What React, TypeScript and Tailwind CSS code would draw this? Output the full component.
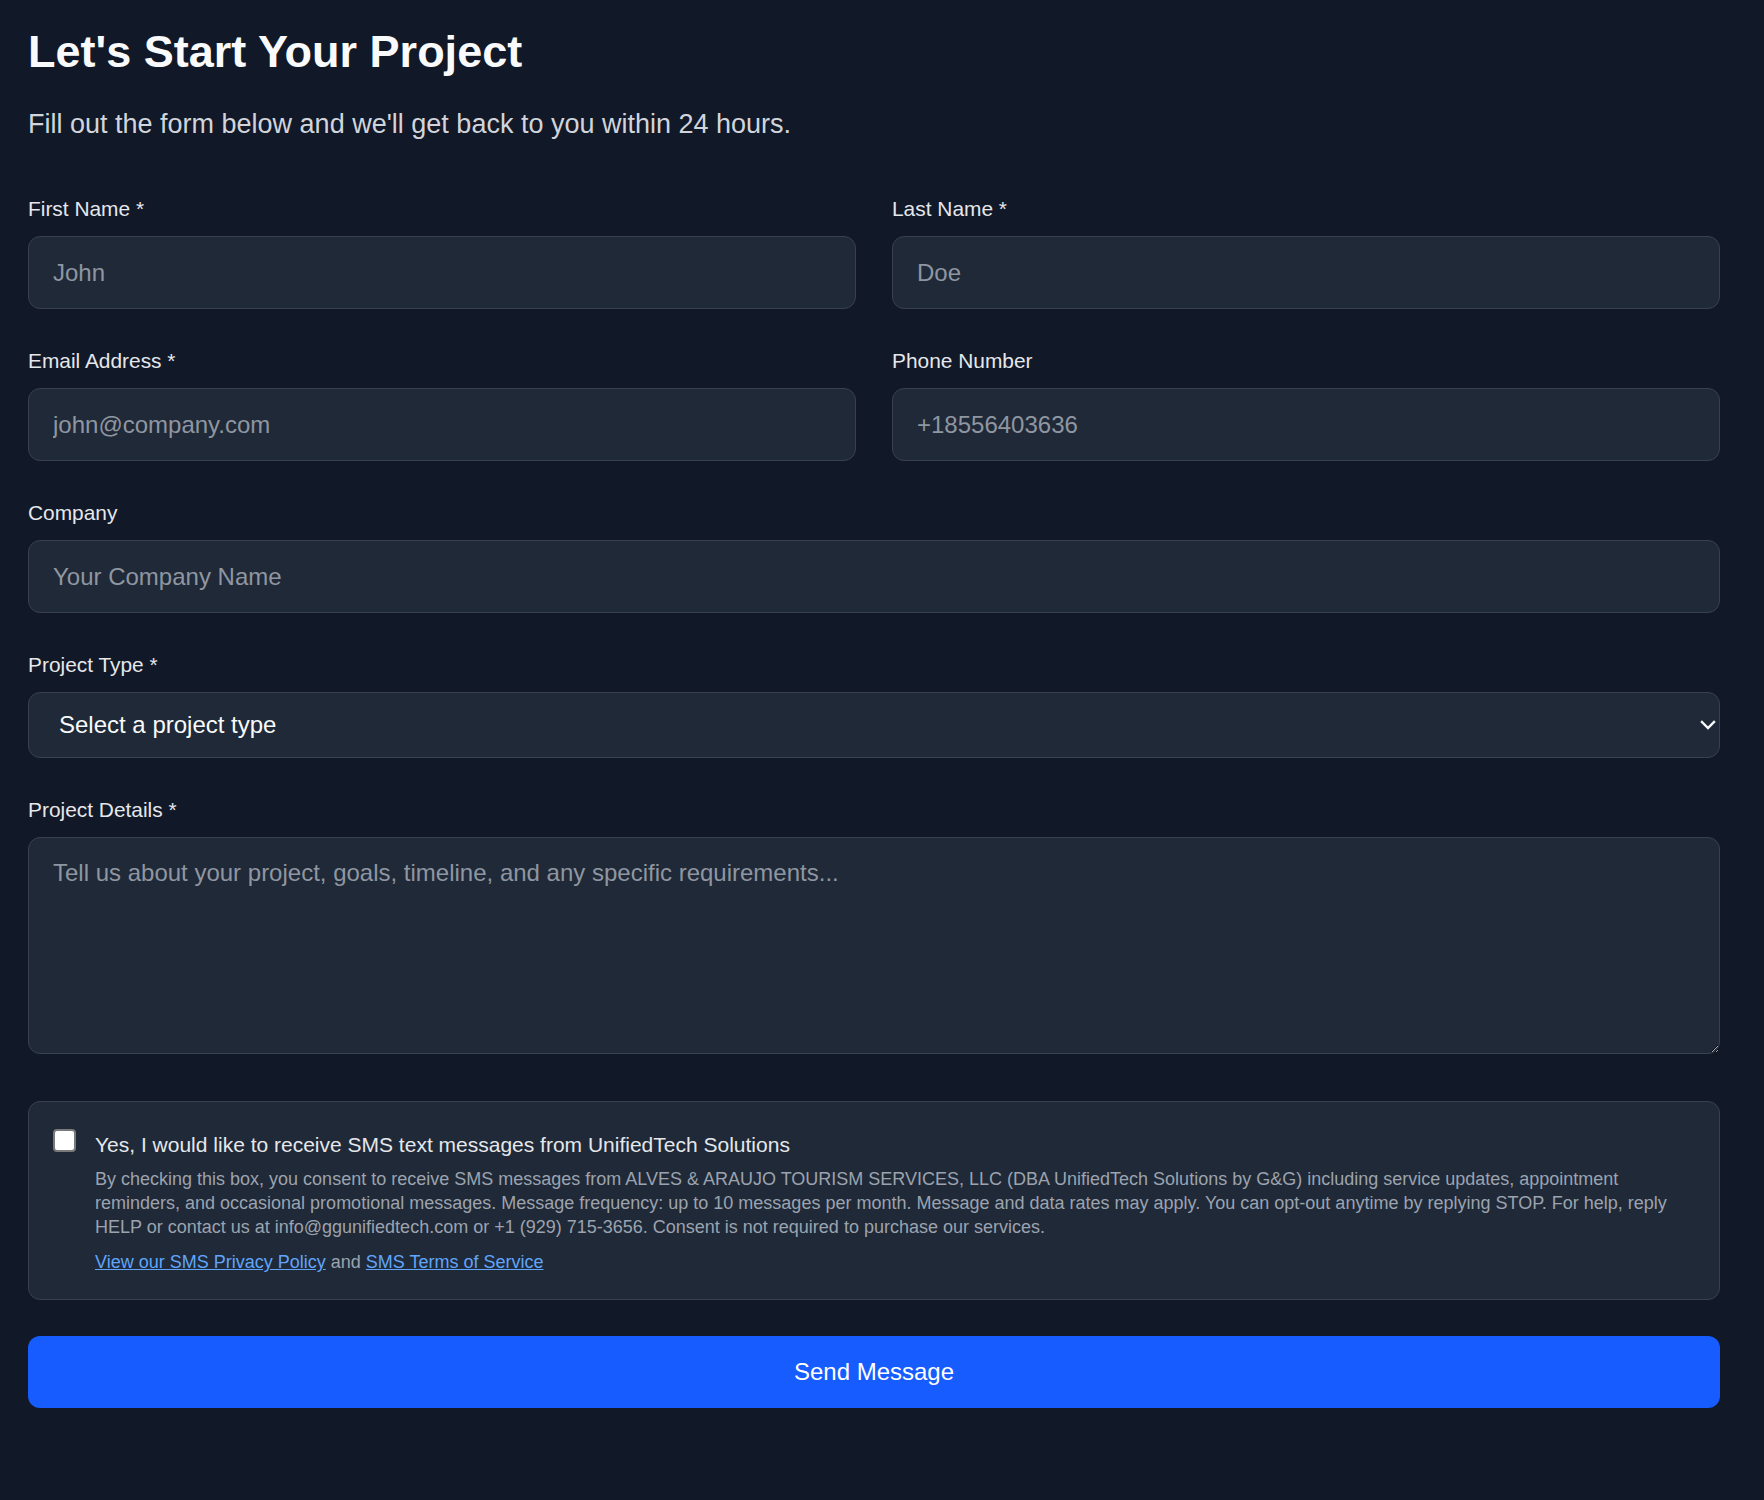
import React from "react";

const font = { fontFamily: '"Liberation Sans", Arial, sans-serif' };

function Label({ children }: { children: React.ReactNode }) {
  return (
    <label className="block text-[20.9px] leading-[28px] text-[#e5e7eb] mb-[13px]">
      {children}
    </label>
  );
}

function Input({ placeholder, type = "text" }: { placeholder: string; type?: string }) {
  return (
    <input
      type={type}
      placeholder={placeholder}
      className="block w-full h-[73px] px-[24px] bg-[#1f2937] border border-[#374151] rounded-[12px] text-[24px] text-[#f3f4f6] placeholder:text-[#8f96a1] outline-none"
    />
  );
}

export default function App() {
  return (
    <div
      className="min-h-screen w-full bg-[#111827] pl-[28px] pr-[44px] pt-[25px] pb-[60px]"
      style={font}
    >
      <h1 className="text-[45px] leading-[54px] font-bold text-[#f9fafb]">
        Let's Start Your Project
      </h1>
      <p className="mt-[27px] text-[27px] leading-[36px] text-[#d1d5db]">
        Fill out the form below and we'll get back to you within 24 hours.
      </p>

      <form className="mt-[53px] flex flex-col" onSubmit={(e) => e.preventDefault()}>
        <div className="flex flex-col gap-[38px]">
          <div className="grid grid-cols-2 gap-x-[36px]">
            <div>
              <Label>First Name *</Label>
              <Input placeholder="John" />
            </div>
            <div>
              <Label>Last Name *</Label>
              <Input placeholder="Doe" />
            </div>
          </div>

          <div className="grid grid-cols-2 gap-x-[36px]">
            <div>
              <Label>Email Address *</Label>
              <Input placeholder="john@company.com" type="email" />
            </div>
            <div>
              <Label>Phone Number</Label>
              <Input placeholder="+18556403636" type="tel" />
            </div>
          </div>

          <div>
            <Label>Company</Label>
            <Input placeholder="Your Company Name" />
          </div>

          <div>
            <Label>Project Type *</Label>
            <div className="relative">
              <select
                defaultValue=""
                className="block w-full h-[66px] pl-[30px] pr-[40px] appearance-none bg-[#1f2937] border border-[#374151] rounded-[12px] text-[24px] text-[#f9fafb] outline-none"
              >
                <option value="">Select a project type</option>
                <option value="web">Web Development</option>
                <option value="mobile">Mobile App</option>
                <option value="other">Other</option>
              </select>
              <svg
                className="pointer-events-none absolute right-[4px] top-1/2 -translate-y-1/2"
                width="16"
                height="10"
                viewBox="0 0 16 10"
                fill="none"
              >
                <path
                  d="M2 2 L8 8 L14 2"
                  stroke="#f9fafb"
                  strokeWidth="2.4"
                  strokeLinecap="square"
                />
              </svg>
            </div>
          </div>

          <div>
            <Label>Project Details *</Label>
            <textarea
              placeholder="Tell us about your project, goals, timeline, and any specific requirements..."
              className="block w-full h-[217px] px-[24px] pt-[17px] bg-[#1f2937] border border-[#374151] rounded-[12px] text-[24px] leading-[36px] text-[#f3f4f6] placeholder:text-[#8f96a1] outline-none"
            />
          </div>
        </div>

        <div className="mt-[47px] bg-[#1f2937] border border-[#374151] rounded-[12px] p-[24px] flex items-start gap-[19px]">
          <input
            type="checkbox"
            className="appearance-none shrink-0 mt-[3px] w-[23px] h-[23px] bg-white border-2 border-[#7a7a7a] rounded-[4px]"
          />
          <div className="flex-1">
            <p className="text-[21px] leading-[38px] text-[#e5e7eb]">
              Yes, I would like to receive SMS text messages from UnifiedTech Solutions
            </p>
            <p className="mt-[4px] text-[18px] leading-[23.8px] text-[#9ca3af]">
              By checking this box, you consent to receive SMS messages from ALVES &amp; ARAUJO
              TOURISM SERVICES, LLC (DBA UnifiedTech Solutions by G&amp;G) including service
              updates, appointment reminders, and occasional promotional messages. Message
              frequency: up to 10 messages per month. Message and data rates may apply. You can
              opt-out anytime by replying STOP. For help, reply HELP or contact us at
              info@ggunifiedtech.com or +1 (929) 715-3656. Consent is not required to purchase our
              services.
            </p>
            <p className="mt-[12px] text-[18px] leading-[23.8px] text-[#9ca3af]">
              <a href="#" className="text-[#60a5fa] underline">
                View our SMS Privacy Policy
              </a>{" "}
              and{" "}
              <a href="#" className="text-[#60a5fa] underline">
                SMS Terms of Service
              </a>
            </p>
          </div>
        </div>

        <button
          type="submit"
          className="mt-[36px] w-full h-[72px] rounded-[12px] bg-[#175cff] text-white text-[24px]"
        >
          Send Message
        </button>
      </form>
    </div>
  );
}
